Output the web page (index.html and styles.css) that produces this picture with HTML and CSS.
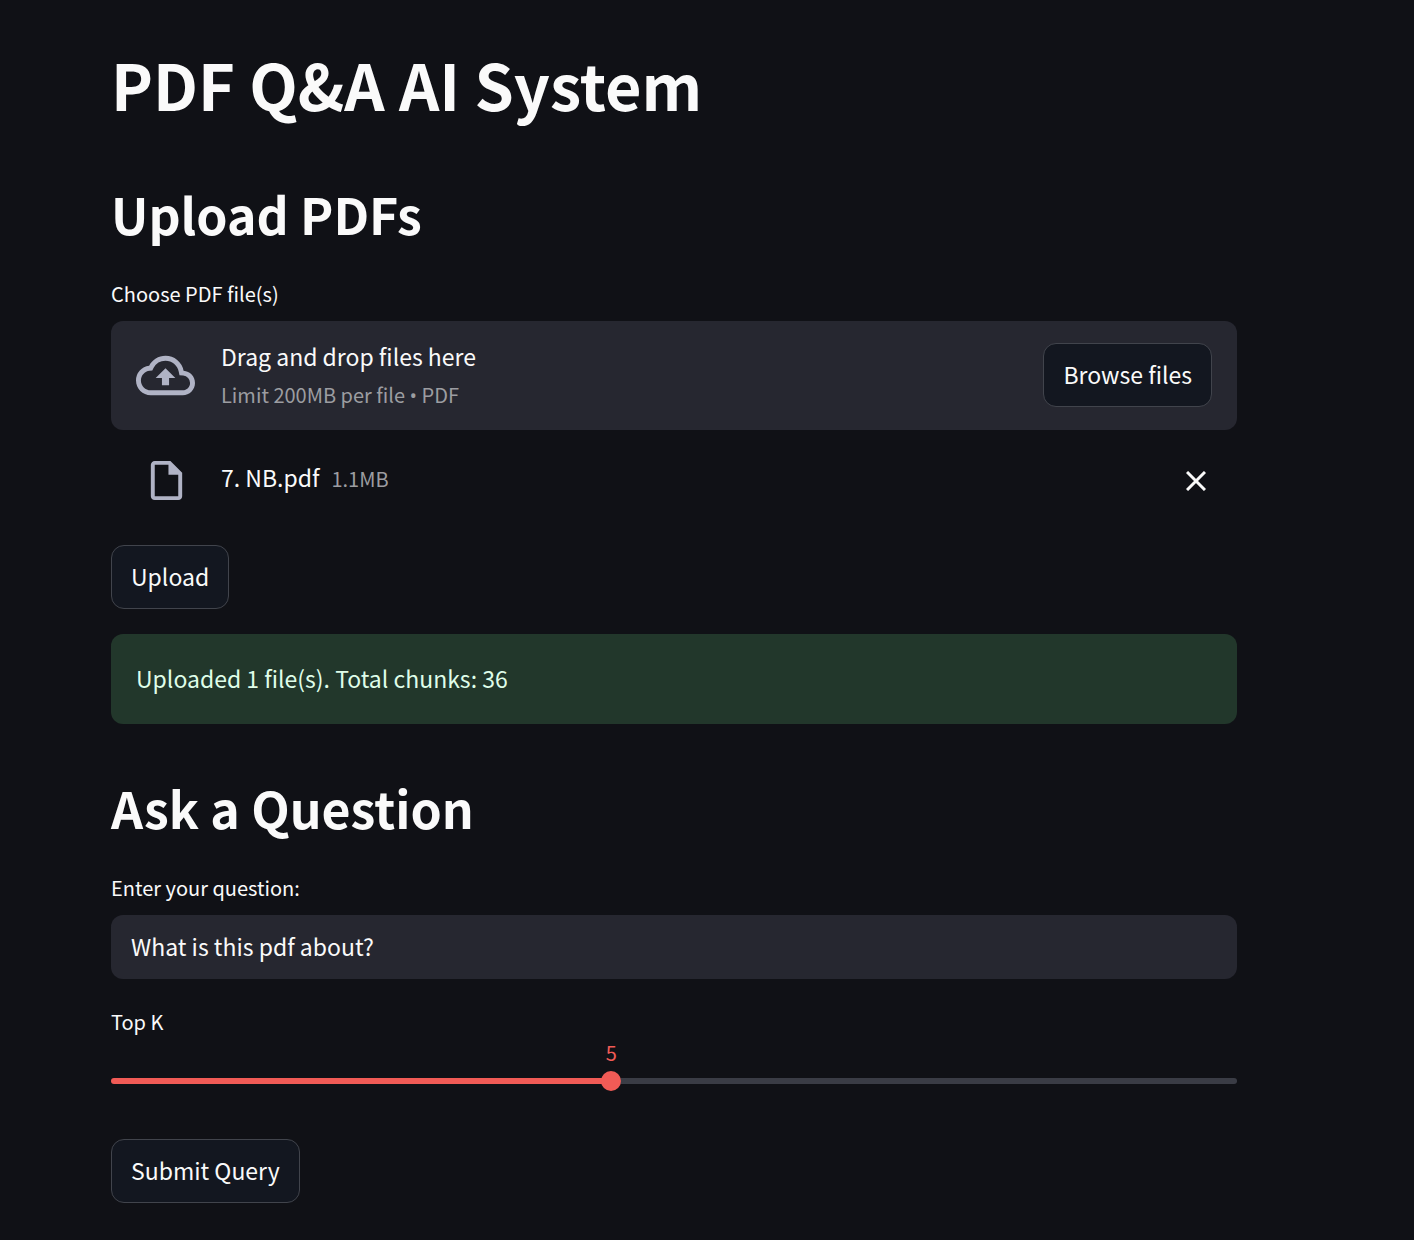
FILE: index.html
```html
<!DOCTYPE html>
<html lang="en">
<head>
<meta charset="utf-8">
<meta name="viewport" content="width=device-width, initial-scale=1">
<title>PDF Q&amp;A AI System</title>
<link rel="stylesheet" href="styles.css">
</head>
<body>
<main class="page">
  <h1 class="title">PDF Q&amp;A AI System</h1>

  <section class="section upload">
    <h2 class="heading">Upload PDFs</h2>
    <p class="label" id="files-label">Choose PDF file(s)</p>
    <div class="dropzone" role="group" aria-labelledby="files-label">
      <svg class="cloud-icon" viewBox="0 0 24 24" aria-hidden="true"><path d="M19.35 10.04A7.49 7.49 0 0 0 12 4C9.11 4 6.6 5.64 5.35 8.04A5.994 5.994 0 0 0 0 14c0 3.31 2.69 6 6 6h13c2.76 0 5-2.24 5-5 0-2.64-2.05-4.78-4.65-4.96zM19 18H6c-2.21 0-4-1.79-4-4 0-2.05 1.53-3.76 3.56-3.97l1.07-.11.5-.95A5.469 5.469 0 0 1 12 6c2.62 0 4.88 1.86 5.39 4.43l.3 1.5 1.53.11A2.98 2.98 0 0 1 22 15c0 1.65-1.35 3-3 3zM8 13h2.55v3h2.9v-3H16l-4-4z"/></svg>
      <div class="dropzone-text">
        <span class="line">Drag and drop files here</span>
        <span class="line small muted">Limit 200MB per file <span class="bullet">•</span> PDF</span>
      </div>
      <button class="button browse" type="button">Browse files</button>
    </div>
    <div class="file">
      <svg class="file-icon" viewBox="0 0 24 24" aria-hidden="true"><path d="M14 2H6c-1.1 0-2 .9-2 2v16c0 1.1.9 2 2 2h12c1.1 0 2-.9 2-2V8l-6-6zm4 18H6V4h7v5h5v11z"/></svg>
      <div class="file-text">
        <span class="line">7. NB.pdf</span>
        <span class="line small muted">1.1MB</span>
      </div>
      <button class="close" type="button" aria-label="Remove file">
        <svg class="close-icon" viewBox="0 0 20 20" aria-hidden="true"><path d="M1 1l18 18M19 1L1 19"/></svg>
      </button>
    </div>
    <button class="button" type="button">Upload</button>
    <div class="alert" role="status">Uploaded 1 file(s). Total chunks: 36</div>
  </section>

  <form class="section ask">
    <h2 class="heading">Ask a Question</h2>
    <label class="label" for="question">Enter your question:</label>
    <input class="text-input" id="question" type="text" value="What is this pdf about?">
    <label class="label topk-label" for="topk">Top K</label>
    <div class="slider" style="--position: 44.44%">
      <output class="slider-value" for="topk">5</output>
      <div class="slider-track">
        <input class="slider-input" id="topk" type="range" min="1" max="10" value="5">
      </div>
    </div>
    <button class="button" type="button">Submit Query</button>
  </form>
</main>
</body>
</html>
```
FILE: styles.css
```css
* { box-sizing: border-box; }

body {
  margin: 0;
  background: #101116;
  color: #fafafa;
  font-family: "Noto Sans CJK SC", "Noto Sans", sans-serif;
  font-size: 23px;
  line-height: 38px;
}

.page { padding: 42px 177px 36px 111px; }

.title {
  margin: 0;
  font-size: 63px;
  font-weight: 700;
  line-height: 84px;
}

.section {
  display: flex;
  flex-direction: column;
  align-items: stretch;
}

.upload { margin-top: 52px; }
.ask { margin-top: 48px; }

.heading {
  margin: 0 0 28px;
  font-size: 50px;
  font-weight: 700;
  line-height: 70px;
}

.label {
  margin: 0 0 9px;
  font-size: 20px;
  line-height: 36px;
}

.line { display: block; }
.small { font-size: 20px; }
.muted { color: #9c9da1; }

.bullet {
  font-family: "Open Sans", sans-serif;
  line-height: 1;
}

.dropzone {
  display: flex;
  align-items: center;
  min-height: 109px;
  padding: 16px 25px;
  border-radius: 12px;
  background: #262730;
}

.cloud-icon {
  flex: none;
  width: 59px;
  height: 59px;
  margin-right: 26px;
  fill: #b0b3c5;
}

.dropzone-text {
  display: grid;
  flex: 1;
  gap: 1px;
}

.button {
  align-self: flex-start;
  height: 64px;
  padding: 0 19px 3px;
  border: 1px solid #41444c;
  border-radius: 13px;
  background: #131720;
  color: inherit;
  font: inherit;
}

.browse {
  align-self: center;
  margin-bottom: 1px;
}

.file {
  display: flex;
  align-items: flex-start;
  margin-bottom: 41px;
  padding: 27px 25px 0 32px;
}

.file-icon {
  flex: none;
  width: 47px;
  height: 47px;
  margin-right: 31px;
  fill: #b0b3c5;
}

.file-text {
  display: flex;
  flex: 1;
  align-items: baseline;
  gap: 12px;
  padding-top: 1px;
}

.close {
  display: flex;
  align-items: center;
  justify-content: center;
  width: 32px;
  height: 47px;
  padding: 0;
  border: 0;
  background: none;
}

.close-icon {
  width: 20px;
  height: 20px;
  fill: none;
  stroke: #fafafa;
  stroke-width: 3;
}

.alert {
  margin-top: 25px;
  padding: 25px 25px 27px;
  border-radius: 12px;
  background: #22372b;
  color: #dffde9;
}

.text-input {
  width: 100%;
  height: 64px;
  padding: 0 20px 3px;
  border: 0;
  border-radius: 12px;
  background: #262730;
  color: inherit;
  font: inherit;
}

.topk-label { margin: 25px 0 0; }

.slider { margin-bottom: 48px; }

.slider-value {
  display: block;
  width: 40px;
  margin-left: calc(var(--position) - 20px);
  color: #f15b56;
  font-size: 20px;
  line-height: 26px;
  text-align: center;
}

.slider-track {
  height: 6px;
  margin: 12px 0 7px;
  display: flex;
  align-items: center;
  border-radius: 3px;
  background: linear-gradient(to right, #f15b56 var(--position), #3a3c45 var(--position));
}

/* The input overhangs by half a thumb so its ends meet the track's ends. */
.slider-input {
  flex: none;
  width: calc(100% + 20px);
  height: 20px;
  margin: 0 -10px;
  appearance: none;
  background: transparent;
}

.slider-input::-webkit-slider-thumb {
  appearance: none;
  width: 20px;
  height: 20px;
  border: 0;
  border-radius: 50%;
  background: #f15b56;
}
```
